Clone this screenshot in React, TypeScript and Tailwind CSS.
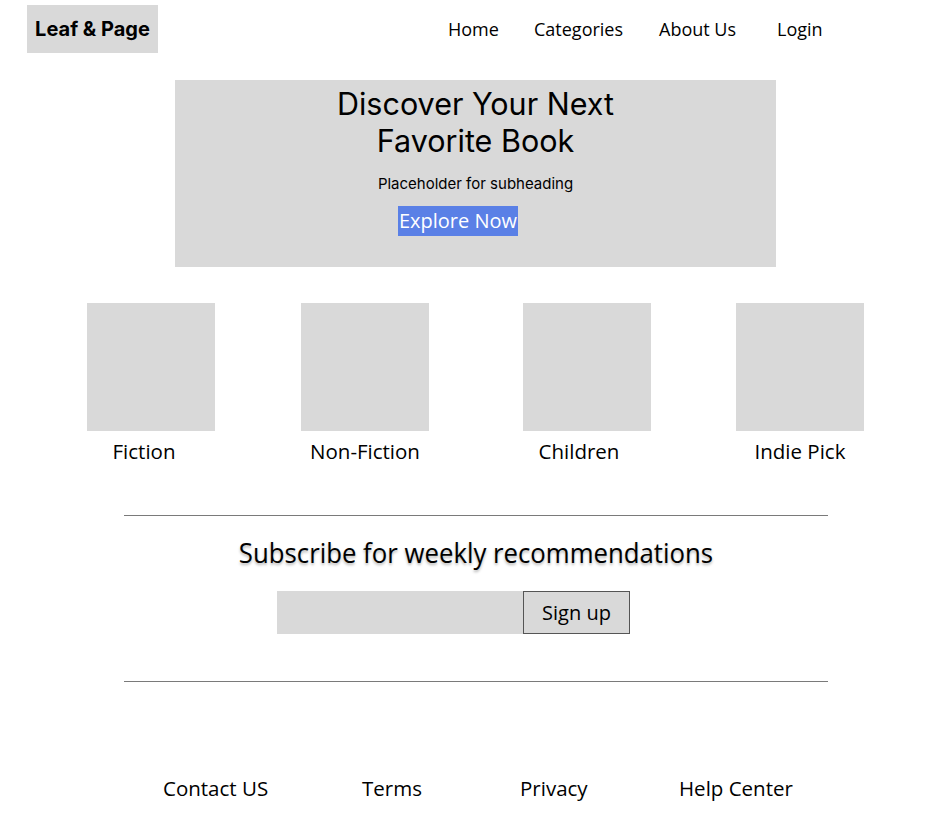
import React from "react";

const open = { fontFamily: '"Open Sans", "Noto Sans", sans-serif' };
const inter = { fontFamily: 'Inter, "Liberation Sans", sans-serif' };

export default function App() {
  const cats = [
    { name: "Fiction", shift: "-ml-[14px]", ml: "" },
    { name: "Non-Fiction", shift: "", ml: "ml-[86px]" },
    { name: "Children", shift: "-ml-[16px]", ml: "ml-[94px]" },
    { name: "Indie Pick", shift: "", ml: "ml-[85px]" },
  ];
  return (
    <div className="w-[950px] h-[826px] bg-white text-black overflow-hidden">
      {/* Header */}
      <header className="flex items-start h-[60px]">
        <div
          className="ml-[27px] mt-[5px] w-[131px] h-[48px] bg-[#d9d9d9] flex items-center justify-center text-[20px] font-bold"
          style={inter}
        >
          Leaf &amp; Page
        </div>
        <nav className="ml-[290px] mt-[16px] flex text-[18px]" style={open}>
          <span className="w-[86px]">Home</span>
          <span className="w-[125px]">Categories</span>
          <span className="w-[118px]">About Us</span>
          <span>Login</span>
        </nav>
      </header>

      {/* Hero */}
      <section className="mt-[20px] ml-[175px] w-[601px] h-[187px] bg-[#d9d9d9] flex flex-col items-center">
        <h1
          className="mt-[5px] text-[30.5px] leading-[37px] text-center font-normal"
          style={inter}
        >
          Discover Your Next
          <br />
          Favorite Book
        </h1>
        <p className="mt-[16px] text-[15px] leading-[18px]" style={inter}>
          Placeholder for subheading
        </p>
        <button
          className="mt-[13px] -ml-[35px] h-[30px] px-[1px] bg-[#5a80e6] text-white text-[20px] leading-[30px]"
          style={open}
        >
          Explore Now
        </button>
      </section>

      {/* Categories */}
      <section className="mt-[36px] ml-[87px] flex">
        {cats.map((c) => (
          <div key={c.name} className={`w-[128px] flex flex-col items-center ${c.ml}`}>
            <div className="w-[128px] h-[128px] bg-[#d9d9d9]" />
            <span
              className={`mt-[6px] text-[20.5px] leading-[28px] whitespace-nowrap ${c.shift}`}
              style={open}
            >
              {c.name}
            </span>
          </div>
        ))}
      </section>

      {/* Subscribe */}
      <section className="mt-[50px] ml-[124px] w-[704px]">
        <div className="h-px bg-[#7a7a7a]" />
        <h2
          className="mt-[19px] text-center text-[28px] leading-[34px] scale-x-[0.92] [text-shadow:0_2px_3px_rgba(0,0,0,0.3)]"
          style={open}
        >
          Subscribe for weekly recommendations
        </h2>
        <div className="mt-[22px] ml-[153px] flex">
          <div className="w-[246px] h-[43px] bg-[#d9d9d9]" />
          <button
            className="w-[107px] h-[43px] bg-[#d9d9d9] border border-[#555] text-[20px]"
            style={open}
          >
            Sign up
          </button>
        </div>
        <div className="mt-[47px] h-px bg-[#7a7a7a]" />
      </section>

      {/* Footer */}
      <footer className="mt-[91px] ml-[163px] flex text-[20.5px] leading-[30px]" style={open}>
        <span className="w-[199px]">Contact US</span>
        <span className="w-[158px]">Terms</span>
        <span className="w-[159px]">Privacy</span>
        <span>Help Center</span>
      </footer>
    </div>
  );
}
